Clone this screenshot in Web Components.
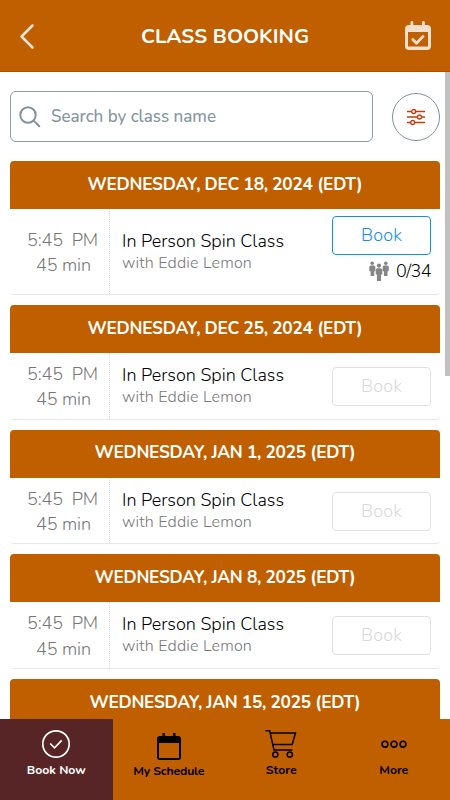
<!DOCTYPE html>
<html lang="en">
<head>
<meta charset="utf-8">
<meta name="viewport" content="width=device-width, initial-scale=1">
<title>Class Booking</title>
<style>
    body {
        margin: 0;
        background: #fff;
        font-family: Nunito, Lato, "Open Sans", sans-serif;
    }
</style>
</head>
<body>
<booking-app></booking-app>

<script>
// Single line of text, tracked so that it fills the given width
class FitText extends HTMLElement {
    constructor() {
        super();
        const shadow = this.attachShadow({ mode: 'open' });
        shadow.innerHTML = `
            <style>
                :host { display: flex; flex: none; }
                span { flex: none; white-space: pre; }
            </style>
            <span><slot></slot></span>
        `;
    }

    connectedCallback() {
        const width = Number(this.getAttribute('width'));
        const span = this.shadowRoot.querySelector('span');
        this.style.width = width + 'px';
        span.style.letterSpacing = '0';
        const extra = width - span.getBoundingClientRect().width;
        span.style.letterSpacing = extra / this.textContent.length + 'px';
    }
}

class AppHeader extends HTMLElement {
    connectedCallback() {
        if (this.shadowRoot) return;
        const shadow = this.attachShadow({ mode: 'open' });
        shadow.innerHTML = `
            <style>
                :host {
                    display: flex;
                    align-items: center;
                    justify-content: space-between;
                    box-sizing: border-box;
                    height: 72px;
                    padding: 0 18px;
                    background: #c05f00;
                    border-bottom: 1px solid #b54a00;
                    color: #fff;
                }
                svg { display: block; }
                .title { padding-top: 1px; font-size: 20.500px; font-weight: 700; line-height: 24px; }
            </style>
            <svg width="28" height="30" viewBox="0 0 28 30" fill="none" stroke="#f7e4d3" stroke-width="2.500" stroke-linecap="round" stroke-linejoin="round">
                <path d="M14.500 4.500 3.500 15.500 14.500 26.500"/>
            </svg>
            <fit-text class="title" width="168">${this.getAttribute('heading')}</fit-text>
            <svg width="28" height="30" viewBox="0 0 28 30">
                <path fill="#f4dfcc" fill-rule="evenodd" d="M7.900 0a1.400 1.400 0 0 1 1.400 1.400V4h8.700V1.400a1.400 1.400 0 0 1 2.800 0V4H23a4 4 0 0 1 4 4v17a4 4 0 0 1-4 4H5a4 4 0 0 1-4-4V8a4 4 0 0 1 4-4h1.500V1.400A1.400 1.400 0 0 1 7.900 0ZM4 11v14.500h20V11Z"/>
                <path d="M8.800 18.500l3.700 3.800 6.500-6.900" fill="none" stroke="#f4dfcc" stroke-width="2.800" stroke-linecap="round" stroke-linejoin="round"/>
            </svg>
        `;
    }
}

class SearchBar extends HTMLElement {
    constructor() {
        super();
        const shadow = this.attachShadow({ mode: 'open' });
        shadow.innerHTML = `
            <style>
                :host {
                    display: flex;
                    align-items: center;
                    justify-content: space-between;
                    height: 51px;
                }
                .field {
                    display: flex;
                    align-items: center;
                    gap: 10px;
                    box-sizing: border-box;
                    width: 363px;
                    height: 51px;
                    padding-left: 8px;
                    border: 1px solid #8d9ba4;
                    border-radius: 6px;
                    color: #84959f;
                    font-size: 17px;
                    font-weight: 500;
                    line-height: 22px;
                }
                .filter {
                    display: flex;
                    align-items: center;
                    justify-content: center;
                    box-sizing: border-box;
                    width: 48px;
                    height: 48px;
                    border: 1px solid #80909b;
                    border-radius: 50%;
                }
            </style>
            <div class="field">
                <svg width="22" height="22" viewBox="0 0 22 22" fill="none" stroke="#82929b" stroke-width="2" stroke-linecap="round">
                    <circle cx="9" cy="9" r="7.700"/>
                    <path d="M14.600 14.600 20.300 20.300"/>
                </svg>
                <fit-text width="165">Search by class name</fit-text>
            </div>
            <div class="filter">
                <svg width="20" height="18" viewBox="0 0 20 18" fill="#fff" stroke="#c23c0c" stroke-width="1.300">
                    <path d="M1 3.500h18M1 9h18M1 14.500h18"/>
                    <circle cx="7.700" cy="3.500" r="2"/>
                    <circle cx="13.500" cy="9" r="2"/>
                    <circle cx="6.700" cy="14.500" r="2"/>
                </svg>
            </div>
        `;
    }
}

class ClassCard extends HTMLElement {
    connectedCallback() {
        if (this.shadowRoot) return;
        const spots = this.getAttribute('spots');
        const row = `
            <div class="row">
                <div class="when">
                    <fit-text width="71">5:45  PM</fit-text>
                    <fit-text width="55">45 min</fit-text>
                </div>
                <div class="what">
                    <fit-text class="name" width="162">In Person Spin Class</fit-text>
                    <fit-text class="with" width="130">with Eddie Lemon</fit-text>
                </div>
                <div class="action">
                    <div class="book"><fit-text width="41">Book</fit-text></div>
                    ${spots ? `
                    <div class="spots">
                        <svg width="20" height="20" viewBox="0 0 20 20" fill="#858585">
                            <circle cx="3.200" cy="2.200" r="1.800"/>
                            <path d="M1.500 4.500h3.600l1.200 1v4.700H5.200V15H1.600V10.200H.3V5.500z"/>
                            <circle cx="16.800" cy="2.200" r="1.800"/>
                            <path d="M14.900 4.500h3.600l1.200 1v4.700h-1.200V15h-3.600V10.200h-1.200V5.500z"/>
                            <circle cx="10" cy="4.600" r="2.100"/>
                            <path d="M8 7.300h4l1.300 1.100v5.100h-1.200V20H7.900v-6.500H6.700V8.400z"/>
                        </svg>
                        <fit-text width="35">${spots}</fit-text>
                    </div>` : ''}
                </div>
            </div>
        `;
        const shadow = this.attachShadow({ mode: 'open' });
        shadow.innerHTML = `
            <style>
                :host {
                    display: block;
                    flex: none;
                    box-sizing: border-box;
                    height: 114.700px;
                    border-bottom: 1px solid #e3e9ec;
                    border-radius: 4px;
                    overflow: hidden;
                }
                :host([spots]) { height: 134px; }
                .date {
                    display: flex;
                    align-items: center;
                    justify-content: center;
                    box-sizing: border-box;
                    height: 48px;
                    padding-bottom: 1px;
                    background: #c05f00;
                    color: #fff;
                    font-size: 17.300px;
                    font-weight: 700;
                    line-height: 24px;
                }
                .row { display: flex; height: calc(100% - 48px); }
                .when, .what {
                    display: flex;
                    flex-direction: column;
                    justify-content: center;
                    box-sizing: border-box;
                    font-size: 18px;
                    font-weight: 300;
                }
                .when {
                    width: 100px;
                    padding: 3px 0 0 17px;
                    border-right: 1px dotted #d8d8d8;
                    color: #777;
                    line-height: 25.500px;
                }
                .when :last-child { margin-left: 9px; }
                .what { flex: 1; padding-left: 12px; color: #000; }
                .name { line-height: 23px; }
                .with { color: #777; font-size: 16px; line-height: 21px; }
                .action {
                    display: flex;
                    flex-direction: column;
                    align-items: flex-end;
                    justify-content: center;
                    padding: 1px 9px 0 0;
                    font-size: 18px;
                    font-weight: 300;
                }
                :host([spots]) .action { justify-content: flex-start; padding-top: 7px; }
                .book {
                    display: flex;
                    align-items: center;
                    justify-content: center;
                    box-sizing: border-box;
                    width: 99px;
                    height: 39px;
                    padding-bottom: 1px;
                    border: 1px solid #e1e1e1;
                    border-radius: 4px;
                    color: #d9d9d9;
                    line-height: 24px;
                }
                :host([spots]) .book { border-color: #168ee6; color: #168ee6; }
                .spots {
                    display: flex;
                    align-items: center;
                    gap: 7px;
                    height: 32px;
                    color: #000;
                    line-height: 24px;
                }
                .spots svg { display: block; }
            </style>
            <div class="date"><fit-text width="${this.getAttribute('fit')}">${this.getAttribute('date')}</fit-text></div>
            ${this.hasAttribute('folded') ? '' : row}
        `;
    }
}

class NavTab extends HTMLElement {
    connectedCallback() {
        if (this.shadowRoot) return;
        const shadow = this.attachShadow({ mode: 'open' });
        shadow.innerHTML = `
            <style>
                :host {
                    display: flex;
                    flex: 1;
                    flex-direction: column;
                    align-items: center;
                    box-sizing: border-box;
                    padding-top: 8px;
                    color: #000;
                    font-size: 12.300px;
                    font-weight: 700;
                    line-height: 18px;
                }
                :host([active]) { background: #582526; color: #fff; }
                :host([low]) { padding-top: 9px; }
                ::slotted(svg) { display: block; flex: none; height: 34px; }
            </style>
            <slot></slot>
            <fit-text width="${this.getAttribute('fit')}">${this.getAttribute('label')}</fit-text>
        `;
    }
}

class BookingApp extends HTMLElement {
    constructor() {
        super();
        const shadow = this.attachShadow({ mode: 'open' });
        shadow.innerHTML = `
            <style>
                :host {
                    display: flex;
                    flex-direction: column;
                    height: 800px;
                    overflow: hidden;
                }
                app-header { flex: none; }
                main {
                    position: relative;
                    flex: 1;
                    display: flex;
                    flex-direction: column;
                    min-height: 0;
                    padding: 19px 10px 0;
                    overflow: hidden;
                }
                search-bar { flex: none; }
                .list { display: flex; flex-direction: column; gap: 10px; margin-top: 19px; }
                .thumb {
                    position: absolute;
                    top: 0;
                    right: 0;
                    width: 5px;
                    height: 304px;
                    background: #c1c1c1;
                }
                nav { display: flex; flex: none; height: 81px; background: #c05f00; }
            </style>
            <app-header heading="CLASS BOOKING"></app-header>
            <main>
                <search-bar></search-bar>
                <div class="list">
                    <class-card date="WEDNESDAY, DEC 18, 2024 (EDT)" fit="275" spots="0/34"></class-card>
                    <class-card date="WEDNESDAY, DEC 25, 2024 (EDT)" fit="275"></class-card>
                    <class-card date="WEDNESDAY, JAN 1, 2025 (EDT)" fit="261"></class-card>
                    <class-card date="WEDNESDAY, JAN 8, 2025 (EDT)" fit="261"></class-card>
                    <class-card date="WEDNESDAY, JAN 15, 2025 (EDT)" fit="271" folded></class-card>
                </div>
                <div class="thumb"></div>
            </main>
            <nav>
                <nav-tab active label="Book Now" fit="59">
                    <svg width="30" height="34" viewBox="0 0 30 34" fill="none" stroke="#fff" stroke-width="1.700">
                        <circle cx="15" cy="17" r="13.200"/>
                        <path d="M9.200 16.500l4.300 4.300 7.200-7.500"/>
                    </svg>
                </nav-tab>
                <nav-tab low label="My Schedule" fit="71">
                    <svg width="26" height="34" viewBox="0 0 26 34">
                        <path fill-rule="evenodd" d="M6.500 5h2.400v3h8.200V5h2.400v3H22a3 3 0 0 1 3 3v18a3 3 0 0 1-3 3H4a3 3 0 0 1-3-3V11a3 3 0 0 1 3-3h2.500ZM3 15v15h20V15Z"/>
                    </svg>
                </nav-tab>
                <nav-tab label="Store" fit="31">
                    <svg width="34" height="34" viewBox="0 0 34 34" fill="none" stroke="#000" stroke-width="1.500">
                        <path d="M1.500 3.700h4.200l4.300 19.400h18.500M6.200 6h25.300l-3.300 11.500H8.900"/>
                        <circle cx="11.300" cy="27.500" r="2.600"/>
                        <circle cx="25.800" cy="27.500" r="2.600"/>
                    </svg>
                </nav-tab>
                <nav-tab label="More" fit="29">
                    <svg width="28" height="34" viewBox="0 0 28 34" fill="none" stroke="#000" stroke-width="1.600">
                        <circle cx="5" cy="17.200" r="2.900"/>
                        <circle cx="14" cy="17.200" r="2.900"/>
                        <circle cx="23" cy="17.200" r="2.900"/>
                    </svg>
                </nav-tab>
            </nav>
        `;
    }
}

customElements.define('fit-text', FitText);
customElements.define('app-header', AppHeader);
customElements.define('search-bar', SearchBar);
customElements.define('class-card', ClassCard);
customElements.define('nav-tab', NavTab);
customElements.define('booking-app', BookingApp);
</script>
</body>
</html>
